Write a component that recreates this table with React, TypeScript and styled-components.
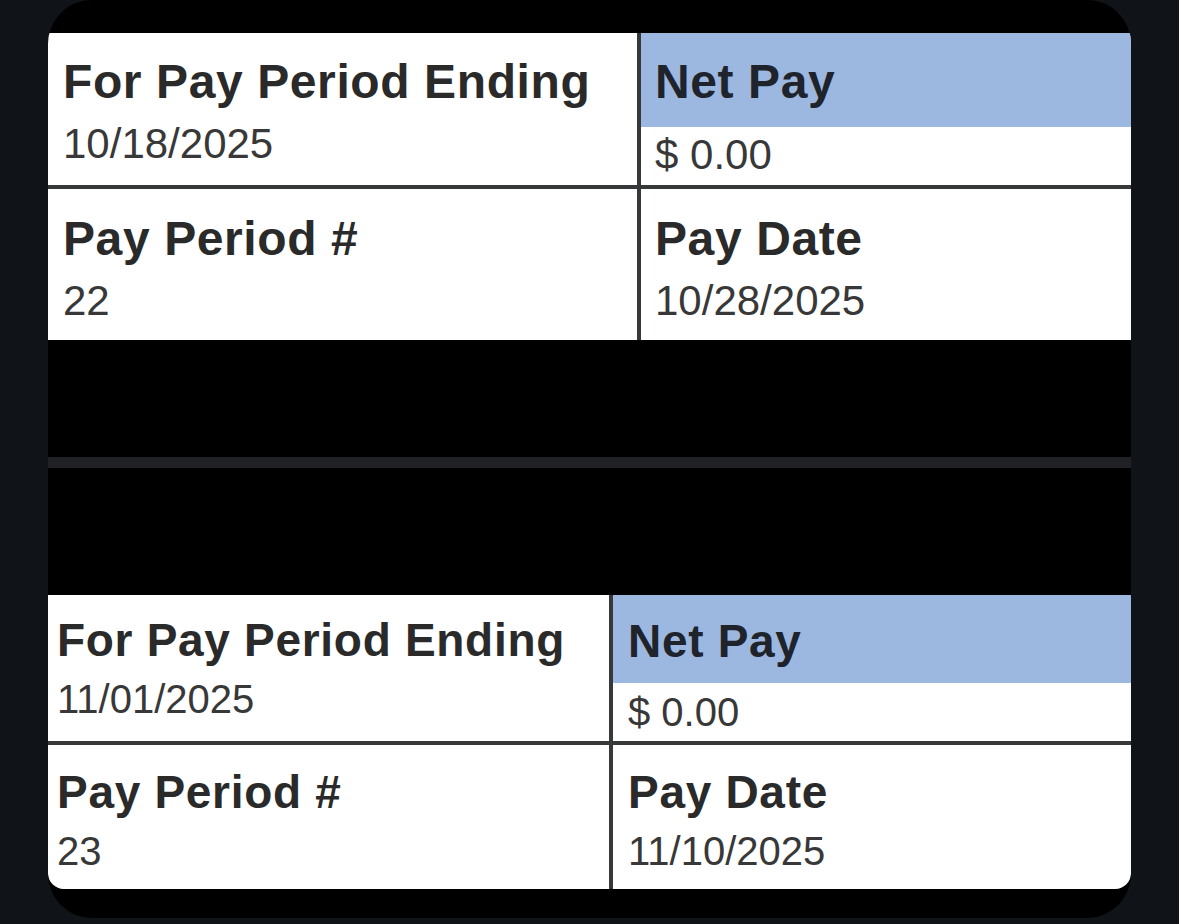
import styled, { createGlobalStyle } from "styled-components"

const GlobalStyle = createGlobalStyle`
    html, body {
        margin: 0;
        padding: 0;
        background: #101317;
    }
    body {
        font-family: "Liberation Sans", Arial, Helvetica, sans-serif;
    }
`

const Page = styled.div`
    width: 1179px;
    height: 924px;
    background: #101317;
    padding-left: 48px;
    box-sizing: border-box;
`

const Card = styled.div`
    width: 1083px;
    height: 918px;
    background: #000;
    border-radius: 44px;
    overflow: hidden;
    display: flex;
    flex-direction: column;
    padding-top: 33px;
    box-sizing: border-box;
`

const Gap = styled.div<{ h: number }>`
    height: ${({ h }) => h}px;
    flex-shrink: 0;
`

const Separator = styled.div`
    height: 11px;
    background: #202124;
    flex-shrink: 0;
`

type TableProps = {
    leftWidth: number;
    rows: [number, number];
    rounded?: boolean;
}

const Table = styled.div<TableProps>`
    display: grid;
    grid-template-columns: ${({ leftWidth }) => leftWidth}px 1fr;
    grid-template-rows: ${({ rows }) => `${rows[0]}px ${rows[1]}px`};
    gap: 4px;
    background: #37383a;
    flex-shrink: 0;
    border-radius: ${({ rounded }) => (rounded ? "0 0 16px 16px" : "0")};
    overflow: hidden;
`

const Cell = styled.div<{ px: number; pt: number }>`
    background: #fff;
    display: flex;
    flex-direction: column;
    padding: ${({ pt, px }) => `${pt}px ${px}px 0`};
    box-sizing: border-box;
    min-width: 0;
`

const BandCell = styled.div`
    background: #fff;
    display: flex;
    flex-direction: column;
    min-width: 0;
`

const Band = styled.div<{ h: number; px: number; pt: number }>`
    height: ${({ h }) => h}px;
    background: #9db8e0;
    padding: ${({ pt, px }) => `${pt}px ${px}px 0`};
    box-sizing: border-box;
    flex-shrink: 0;
`

const Label = styled.div<{ fs: number; ls: number; dark?: boolean }>`
    font-family: "Liberation Sans", Arial, sans-serif;
    font-weight: 700;
    font-size: ${({ fs }) => fs}px;
    line-height: ${({ fs }) => fs}px;
    letter-spacing: ${({ ls }) => ls}px;
    color: ${({ dark }) => (dark ? "#1f242c" : "#2a2a2a")};
    white-space: nowrap;
`

const Value = styled.div<{ fs: number; mt: number; px?: number }>`
    font-family: "Liberation Sans", Arial, sans-serif;
    font-weight: 400;
    font-size: ${({ fs }) => fs}px;
    line-height: ${({ fs }) => fs}px;
    color: #383838;
    margin-top: ${({ mt }) => mt}px;
    padding-left: ${({ px }) => px ?? 0}px;
    white-space: nowrap;
`

type StubData = {
    ending: string;
    period: string;
    net: string;
    payDate: string;
}

type StubLayout = {
    leftWidth: number;
    rows: [number, number];
    band: number;
    labelFs: number;
    labelLs: number;
    valueFs: number;
    leftPx: number;
    rightPx: number;
    row1Pt: number;
    row2Pt: number;
    bandPt: number;
    valueGap: number;
    netGap: number;
    rounded?: boolean;
}

const PayStub = ({ data, l }: { data: StubData; l: StubLayout }) => (
    <Table leftWidth={l.leftWidth} rows={l.rows} rounded={l.rounded}>
        <Cell px={l.leftPx} pt={l.row1Pt}>
            <Label fs={l.labelFs} ls={l.labelLs}>For Pay Period Ending</Label>
            <Value fs={l.valueFs} mt={l.valueGap}>{data.ending}</Value>
        </Cell>
        <BandCell>
            <Band h={l.band} px={l.rightPx} pt={l.bandPt}>
                <Label fs={l.labelFs} ls={l.labelLs} dark>Net Pay</Label>
            </Band>
            <Value fs={l.valueFs} mt={l.netGap} px={l.rightPx}>{data.net}</Value>
        </BandCell>
        <Cell px={l.leftPx} pt={l.row2Pt}>
            <Label fs={l.labelFs} ls={l.labelLs}>Pay Period #</Label>
            <Value fs={l.valueFs} mt={l.valueGap}>{data.period}</Value>
        </Cell>
        <Cell px={l.rightPx} pt={l.row2Pt}>
            <Label fs={l.labelFs} ls={l.labelLs}>Pay Date</Label>
            <Value fs={l.valueFs} mt={l.valueGap}>{data.payDate}</Value>
        </Cell>
    </Table>
)

const first: StubLayout = {
    leftWidth: 589,
    rows: [152, 151],
    band: 94,
    labelFs: 48,
    labelLs: 0.6,
    valueFs: 42,
    leftPx: 15,
    rightPx: 14,
    row1Pt: 25,
    row2Pt: 26,
    bandPt: 25,
    valueGap: 17,
    netGap: 7,
}

const second: StubLayout = {
    leftWidth: 561,
    rows: [146, 144],
    band: 88,
    labelFs: 46,
    labelLs: 0.7,
    valueFs: 40,
    leftPx: 9,
    rightPx: 15,
    row1Pt: 22,
    row2Pt: 24,
    bandPt: 23,
    valueGap: 16,
    netGap: 9,
    rounded: true,
}

export default function App() {
    return (
        <>
            <GlobalStyle />
            <Page>
                <Card>
                    <PayStub
                        l={first}
                        data={{ ending: "10/18/2025", period: "22", net: "$ 0.00", payDate: "10/28/2025" }}
                    />
                    <Gap h={117} />
                    <Separator />
                    <Gap h={127} />
                    <PayStub
                        l={second}
                        data={{ ending: "11/01/2025", period: "23", net: "$ 0.00", payDate: "11/10/2025" }}
                    />
                </Card>
            </Page>
        </>
    )
}
